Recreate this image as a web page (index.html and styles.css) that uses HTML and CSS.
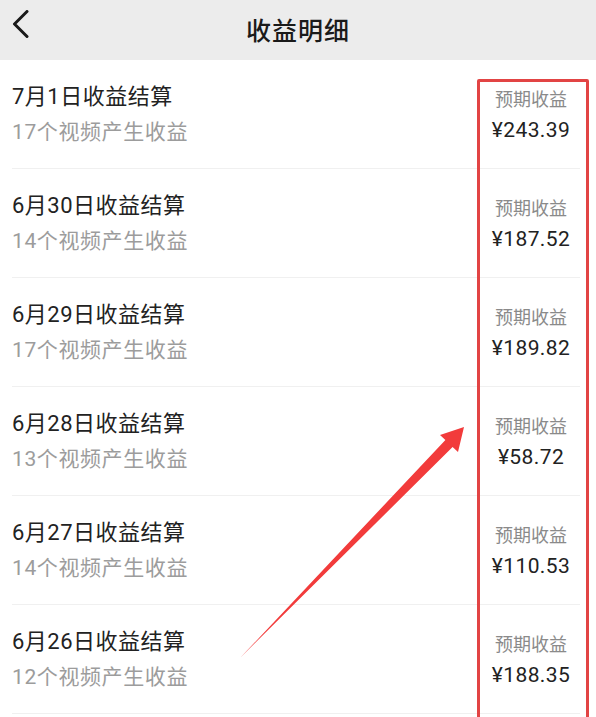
FILE: index.html
```html
<!DOCTYPE html>
<html lang="zh-CN">
<head>
<meta charset="utf-8">
<title>收益明细</title>
<link rel="stylesheet" href="styles.css">
</head>
<body>
<div class="page">
  <header class="header">
    <svg class="back" width="20" height="30" viewBox="0 0 20 30"><path d="M15 1.5 L2.5 14 L15 26.5" fill="none" stroke="#1a1a1a" stroke-width="3" stroke-linecap="round" stroke-linejoin="round"/></svg>
    <h1 class="title">收益明细</h1>
  </header>
  <ul class="list">
    <li class="row"><div class="info"><div class="name">7月1日收益结算</div><div class="sub">17个视频产生收益</div></div><div class="money"><div class="label">预期收益</div><div class="amt">¥243.39</div></div></li>
    <li class="row"><div class="info"><div class="name">6月30日收益结算</div><div class="sub">14个视频产生收益</div></div><div class="money"><div class="label">预期收益</div><div class="amt">¥187.52</div></div></li>
    <li class="row"><div class="info"><div class="name">6月29日收益结算</div><div class="sub">17个视频产生收益</div></div><div class="money"><div class="label">预期收益</div><div class="amt">¥189.82</div></div></li>
    <li class="row"><div class="info"><div class="name">6月28日收益结算</div><div class="sub">13个视频产生收益</div></div><div class="money"><div class="label">预期收益</div><div class="amt">¥58.72</div></div></li>
    <li class="row"><div class="info"><div class="name">6月27日收益结算</div><div class="sub">14个视频产生收益</div></div><div class="money"><div class="label">预期收益</div><div class="amt">¥110.53</div></div></li>
    <li class="row"><div class="info"><div class="name">6月26日收益结算</div><div class="sub">12个视频产生收益</div></div><div class="money"><div class="label">预期收益</div><div class="amt">¥188.35</div></div></li>
  </ul>
  <div class="highlight"></div>
  <svg class="arrow" width="596" height="717" viewBox="0 0 596 717"><polygon points="240,658 445.4,440 440,435 464,427 458,452 452.6,447" fill="#f23b3b"/></svg>
</div>
</body>
</html>
```
FILE: styles.css
```css
html, body {
  margin: 0;
  padding: 0;
  background: #ffffff;
}
body {
  font-family: Roboto, "Noto Sans CJK SC", sans-serif;
}
.page {
  position: relative;
  width: 596px;
  height: 717px;
  overflow: hidden;
  background: #ffffff;
}
.header {
  height: 60px;
  background: #ececec;
  display: flex;
  align-items: center;
  justify-content: center;
  position: relative;
}
.back {
  position: absolute;
  left: 12px;
  top: 10px;
}
.title {
  margin: 0 0 2px 0;
  font-size: 25px;
  font-weight: 500;
  color: #1a1a1a;
  letter-spacing: 1px;
}
.list {
  list-style: none;
  margin: 0;
  padding: 0;
}
.row {
  display: flex;
  justify-content: space-between;
  height: 108px;
  margin: 0 16px 0 12px;
  border-bottom: 1px solid #f0f0f0;
  box-sizing: content-box;
}
.info {
  padding-top: 23px;
}
.name {
  font-size: 22px;
  line-height: 28px;
  color: #222222;
  letter-spacing: 0.5px;
}
.sub {
  font-size: 21px;
  line-height: 28px;
  color: #9c9c9c;
  margin-top: 7px;
  letter-spacing: 0.6px;
}
.money {
  width: 100px;
  margin-right: -1px;
  text-align: center;
  padding-top: 28px;
}
.label {
  font-size: 18px;
  line-height: 24px;
  color: #8a8a8a;
}
.amt {
  font-size: 21px;
  line-height: 30px;
  color: #222222;
  margin-top: 3px;
  letter-spacing: 0.4px;
}
.highlight {
  position: absolute;
  left: 477px;
  top: 79px;
  width: 106px;
  height: 700px;
  border: 3.5px solid #e24444;
  border-radius: 2px;
}
.arrow {
  position: absolute;
  left: 0;
  top: 0;
  pointer-events: none;
}
```
